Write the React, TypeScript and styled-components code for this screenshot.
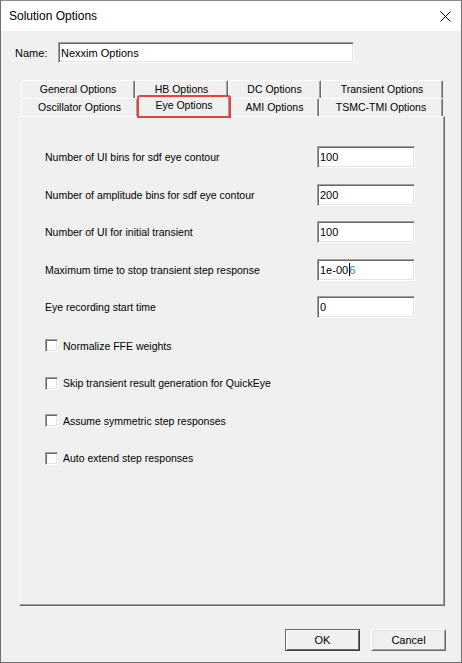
import React from "react";
import styled, { createGlobalStyle } from "styled-components";

const GlobalStyle = createGlobalStyle`
  html,
  body {
    margin: 0;
    padding: 0;
    background: #ffffff;
  }

  body {
    font-family: "Liberation Sans", Arial, sans-serif;
    font-size: 10.5px;
    color: #000;
  }
`;

const Window = styled.div`
  box-sizing: border-box;
  width: 462px;
  height: 663px;
  border: 1px solid #6e6e6e;
  border-top-color: #8c8c8c;
  background: #f0f0f0;
  display: flex;
  flex-direction: column;
`;

const TitleBar = styled.div`
  flex: 0 0 30px;
  display: flex;
  align-items: center;
  justify-content: space-between;
  padding-left: 8px;
  background: #ffffff;
  font-size: 12px;
`;

const CloseButton = styled.div`
  display: flex;
  align-items: center;
  padding-right: 10px;
  height: 100%;
`;

const NameRow = styled.div`
  display: flex;
  align-items: center;
  margin-top: 11px;
  padding-left: 14px;
`;

const NameLabel = styled.span`
  width: 43px;
  font-size: 11px;
`;

const TextBox = styled.div<{ $width: number; $height: number }>`
  box-sizing: border-box;
  width: ${(p) => p.$width}px;
  height: ${(p) => p.$height}px;
  display: flex;
  align-items: center;
  padding-left: 2px;
  background: #ffffff;
  border: 1px solid;
  border-color: #a0a0a0 #ffffff #ffffff #a0a0a0;
  box-shadow: inset 1px 1px 0 #696969, inset -1px -1px 0 #e3e3e3;
  font-size: 11px;
  white-space: nowrap;
`;

const TabArea = styled.div`
  flex: 1;
  display: flex;
  flex-direction: column;
  margin: 17px 16px 0 18px;
`;

const TabRow = styled.div`
  display: flex;
  align-items: flex-start;
  height: 18px;
  padding-left: 2px;
`;

const Tab = styled.div<{ $width: number; $selected?: boolean }>`
  box-sizing: border-box;
  flex: 0 0 ${(p) => p.$width}px;
  height: ${(p) => (p.$selected ? 21 : 18)}px;
  margin-top: ${(p) => (p.$selected ? -2 : 0)}px;
  padding-bottom: ${(p) => (p.$selected ? 4 : 1)}px;
  display: flex;
  align-items: center;
  justify-content: center;
  background: #f0f0f0;
  border-top: 1px solid #ffffff;
  border-left: 1px solid #ffffff;
  border-right: 1px solid #696969;
  border-top-left-radius: 2px;
  border-top-right-radius: 2px;
  box-shadow: inset -1px 0 0 #a0a0a0;
  white-space: nowrap;

  ${(p) =>
    p.$selected
      ? `
  position: relative;
  z-index: 1;
  outline: 2px solid #e8423f;
  outline-offset: -1px;
  `
      : ""}
`;

const Panel = styled.div`
  flex: 1;
  display: flex;
  flex-direction: column;
  padding: 29px 29px 0 25px;
  border-top: 1px solid #ffffff;
  border-left: 1px solid #ffffff;
  border-right: 1px solid #696969;
  border-bottom: 1px solid #696969;
  box-shadow: inset -1px -1px 0 #a0a0a0;
`;

const FieldGrid = styled.div`
  display: grid;
  grid-template-columns: 1fr 98px;
  grid-auto-rows: 22px;
  row-gap: 15.5px;
  align-items: center;
`;

const FieldLabel = styled.span`
  white-space: nowrap;
`;

const Caret = styled.span`
  display: inline-block;
  width: 1px;
  height: 13px;
  background: #000;
  margin: 0 -1px 0 1px;
  vertical-align: middle;
`;

const CaretDigit = styled.span`
  color: #2f78d4;
`;

const CheckList = styled.div`
  display: flex;
  flex-direction: column;
  gap: 24.5px;
  margin-top: 21px;
`;

const CheckRow = styled.label`
  display: flex;
  align-items: center;
  gap: 5px;
  height: 13px;
  white-space: nowrap;
`;

const CheckBox = styled.span`
  box-sizing: border-box;
  flex: 0 0 13px;
  height: 13px;
  background: #ffffff;
  border: 1px solid;
  border-color: #a0a0a0 #ffffff #ffffff #a0a0a0;
  box-shadow: inset 1px 1px 0 #696969, inset -1px -1px 0 #e3e3e3;
`;

const Footer = styled.div`
  display: flex;
  justify-content: flex-end;
  gap: 11px;
  padding: 23px 15px 11px 0;
`;

const Button = styled.div<{ $default?: boolean }>`
  box-sizing: border-box;
  width: 75px;
  height: 22px;
  display: flex;
  align-items: center;
  justify-content: center;
  font-size: 11px;
  background: #f0f0f0;
  border: 1px solid;
  border-color: ${(p) =>
    p.$default
      ? "#696969 #404040 #404040 #696969"
      : "#ffffff #696969 #696969 #ffffff"};
  box-shadow: ${(p) =>
    p.$default
      ? "inset 1px 1px 0 #ffffff, inset -1px -1px 0 #696969"
      : "inset 1px 1px 0 #e3e3e3, inset -1px -1px 0 #a0a0a0"};
`;

const backTabs = [
  { label: "General Options", width: 114 },
  { label: "HB Options", width: 93 },
  { label: "DC Options", width: 93 },
  { label: "Transient Options", width: 122 },
];

const frontTabs = [
  { label: "Oscillator Options", width: 117 },
  { label: "Eye Options", width: 92, selected: true },
  { label: "AMI Options", width: 89 },
  { label: "TSMC-TMI Options", width: 124 },
];

const fields: { label: string; value: React.ReactNode }[] = [
  { label: "Number of UI bins for sdf eye contour", value: "100" },
  { label: "Number of amplitude bins for sdf eye contour", value: "200" },
  { label: "Number of UI for initial transient", value: "100" },
  {
    label: "Maximum time to stop transient step response",
    value: (
      <>
        1e-00
        <Caret />
        <CaretDigit>6</CaretDigit>
      </>
    ),
  },
  { label: "Eye recording start time", value: "0" },
];

const checks = [
  "Normalize FFE weights",
  "Skip transient result generation for QuickEye",
  "Assume symmetric step responses",
  "Auto extend step responses",
];

export default function App() {
  return (
    <>
      <GlobalStyle />
      <Window>
        <TitleBar>
          <span>Solution Options</span>
          <CloseButton>
            <svg width="11" height="11" viewBox="0 0 11 11">
              <path
                d="M0.5 0.5 L10.5 10.5 M10.5 0.5 L0.5 10.5"
                stroke="#000"
                strokeWidth="1"
                fill="none"
              />
            </svg>
          </CloseButton>
        </TitleBar>

        <NameRow>
          <NameLabel>Name:</NameLabel>
          <TextBox $width={296} $height={21}>
            Nexxim Options
          </TextBox>
        </NameRow>

        <TabArea>
          <TabRow>
            {backTabs.map((t) => (
              <Tab key={t.label} $width={t.width}>
                {t.label}
              </Tab>
            ))}
          </TabRow>
          <TabRow>
            {frontTabs.map((t) => (
              <Tab key={t.label} $width={t.width} $selected={t.selected}>
                {t.label}
              </Tab>
            ))}
          </TabRow>
          <Panel>
            <FieldGrid>
              {fields.map((f) => (
                <React.Fragment key={f.label}>
                  <FieldLabel>{f.label}</FieldLabel>
                  <TextBox $width={98} $height={22}>
                    {f.value}
                  </TextBox>
                </React.Fragment>
              ))}
            </FieldGrid>
            <CheckList>
              {checks.map((c) => (
                <CheckRow key={c}>
                  <CheckBox />
                  {c}
                </CheckRow>
              ))}
            </CheckList>
          </Panel>
        </TabArea>

        <Footer>
          <Button $default>OK</Button>
          <Button>Cancel</Button>
        </Footer>
      </Window>
    </>
  );
}
